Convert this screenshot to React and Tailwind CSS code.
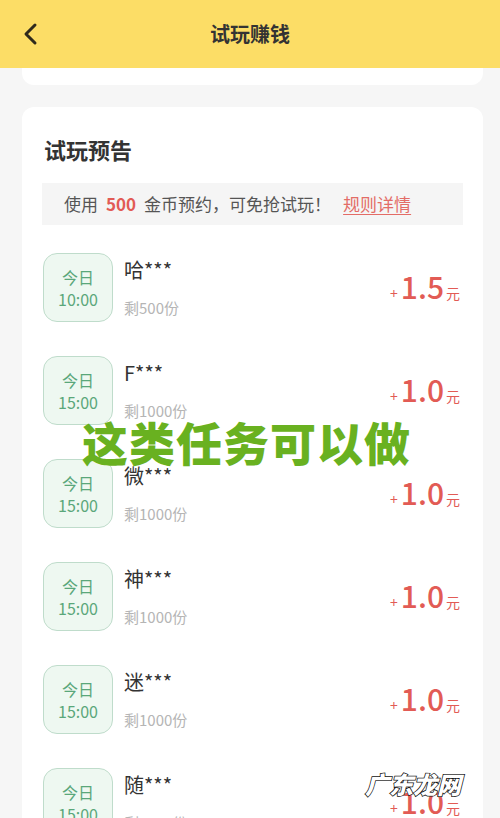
import React from 'react';

const items = [
    { name: '哈***', time: '10:00', left: '剩500份', price: '1.5' },
    { name: 'F***', time: '15:00', left: '剩1000份', price: '1.0' },
    { name: '微***', time: '15:00', left: '剩1000份', price: '1.0' },
    { name: '神***', time: '15:00', left: '剩1000份', price: '1.0' },
    { name: '迷***', time: '15:00', left: '剩1000份', price: '1.0' },
    { name: '随***', time: '15:00', left: '剩1000份', price: '1.0' },
];

const font = { fontFamily: '"Noto Sans CJK SC", "Noto Sans", sans-serif' };

const TaskRow = ({ item }) => (
    <div className="flex items-center h-[69px] mb-[34px]">
        <div className="w-[70px] h-[69px] shrink-0 rounded-[14px] border border-[#bfdccb] bg-[#eef8f1] flex flex-col items-center justify-center text-[#5aa77a] text-[16px] leading-[22px]">
            <span>今日</span>
            <span>{item.time}</span>
        </div>
        <div className="ml-[11px] flex-1 h-full flex flex-col justify-between pt-[3px] pb-[3px]">
            <span className="text-[20px] leading-[28px] text-[#333]">{item.name}</span>
            <span className="text-[15px] leading-[22px] text-[#b5b5b5]">{item.left}</span>
        </div>
        <div className="flex items-baseline text-[#e25b55] mr-[1px]">
            <span className="text-[14px] mr-[3px]">+</span>
            <span className="text-[30px] font-medium leading-none">{item.price}</span>
            <span className="text-[14px] ml-[2px]">元</span>
        </div>
    </div>
);

export default function App() {
    return (
        <div className="w-[500px] h-[818px] overflow-hidden bg-[#f6f6f6] relative" style={font}>
            <div className="h-[68px] bg-[#fcdd66] flex items-center relative">
                <svg className="absolute left-[21px] top-[22px]" width="20" height="24" viewBox="0 0 20 24">
                    <path d="M14 3 L5 12 L14 21" fill="none" stroke="#2f2a1c" strokeWidth="3" strokeLinecap="round" strokeLinejoin="round" />
                </svg>
                <h1 className="w-full text-center text-[20px] font-bold text-[#333]">试玩赚钱</h1>
            </div>

            <div className="ml-[22px] mr-[17px] h-[17px] bg-white rounded-b-[12px]" />

            <div className="ml-[22px] mr-[17px] mt-[22px] bg-white rounded-t-[12px] px-[20px] pt-[24px]">
                <h2 className="ml-[2px] text-[22px] font-bold text-[#333] leading-[36px]">试玩预告</h2>
                <div className="mt-[16px] h-[42px] bg-[#f5f5f5] flex items-center pl-[22px] text-[17px] text-[#555] whitespace-nowrap">
                    <span>使用</span>
                    <span className="mx-[8px] text-[#e25b55] font-bold">500</span>
                    <span>金币预约，可免抢试玩！</span>
                    <span className="ml-[12px] text-[#e36c66] underline underline-offset-[3px]">规则详情</span>
                </div>
                <div className="mt-[28px] pl-[1px] pr-[2px]">
                    {items.map((item, i) => (
                        <TaskRow key={i} item={item} />
                    ))}
                </div>
            </div>

            <div className="absolute left-[82px] top-[418px] text-[46px] font-black text-[#69b120] leading-none tracking-[1px]">
                这类任务可以做
            </div>

            <div
                className="absolute left-[365px] top-[772px] text-[24px] font-black italic text-white leading-none"
                style={{ WebkitTextStroke: '1.5px #111', paintOrder: 'stroke fill' }}
            >
                广东龙网
            </div>
        </div>
    );
}
